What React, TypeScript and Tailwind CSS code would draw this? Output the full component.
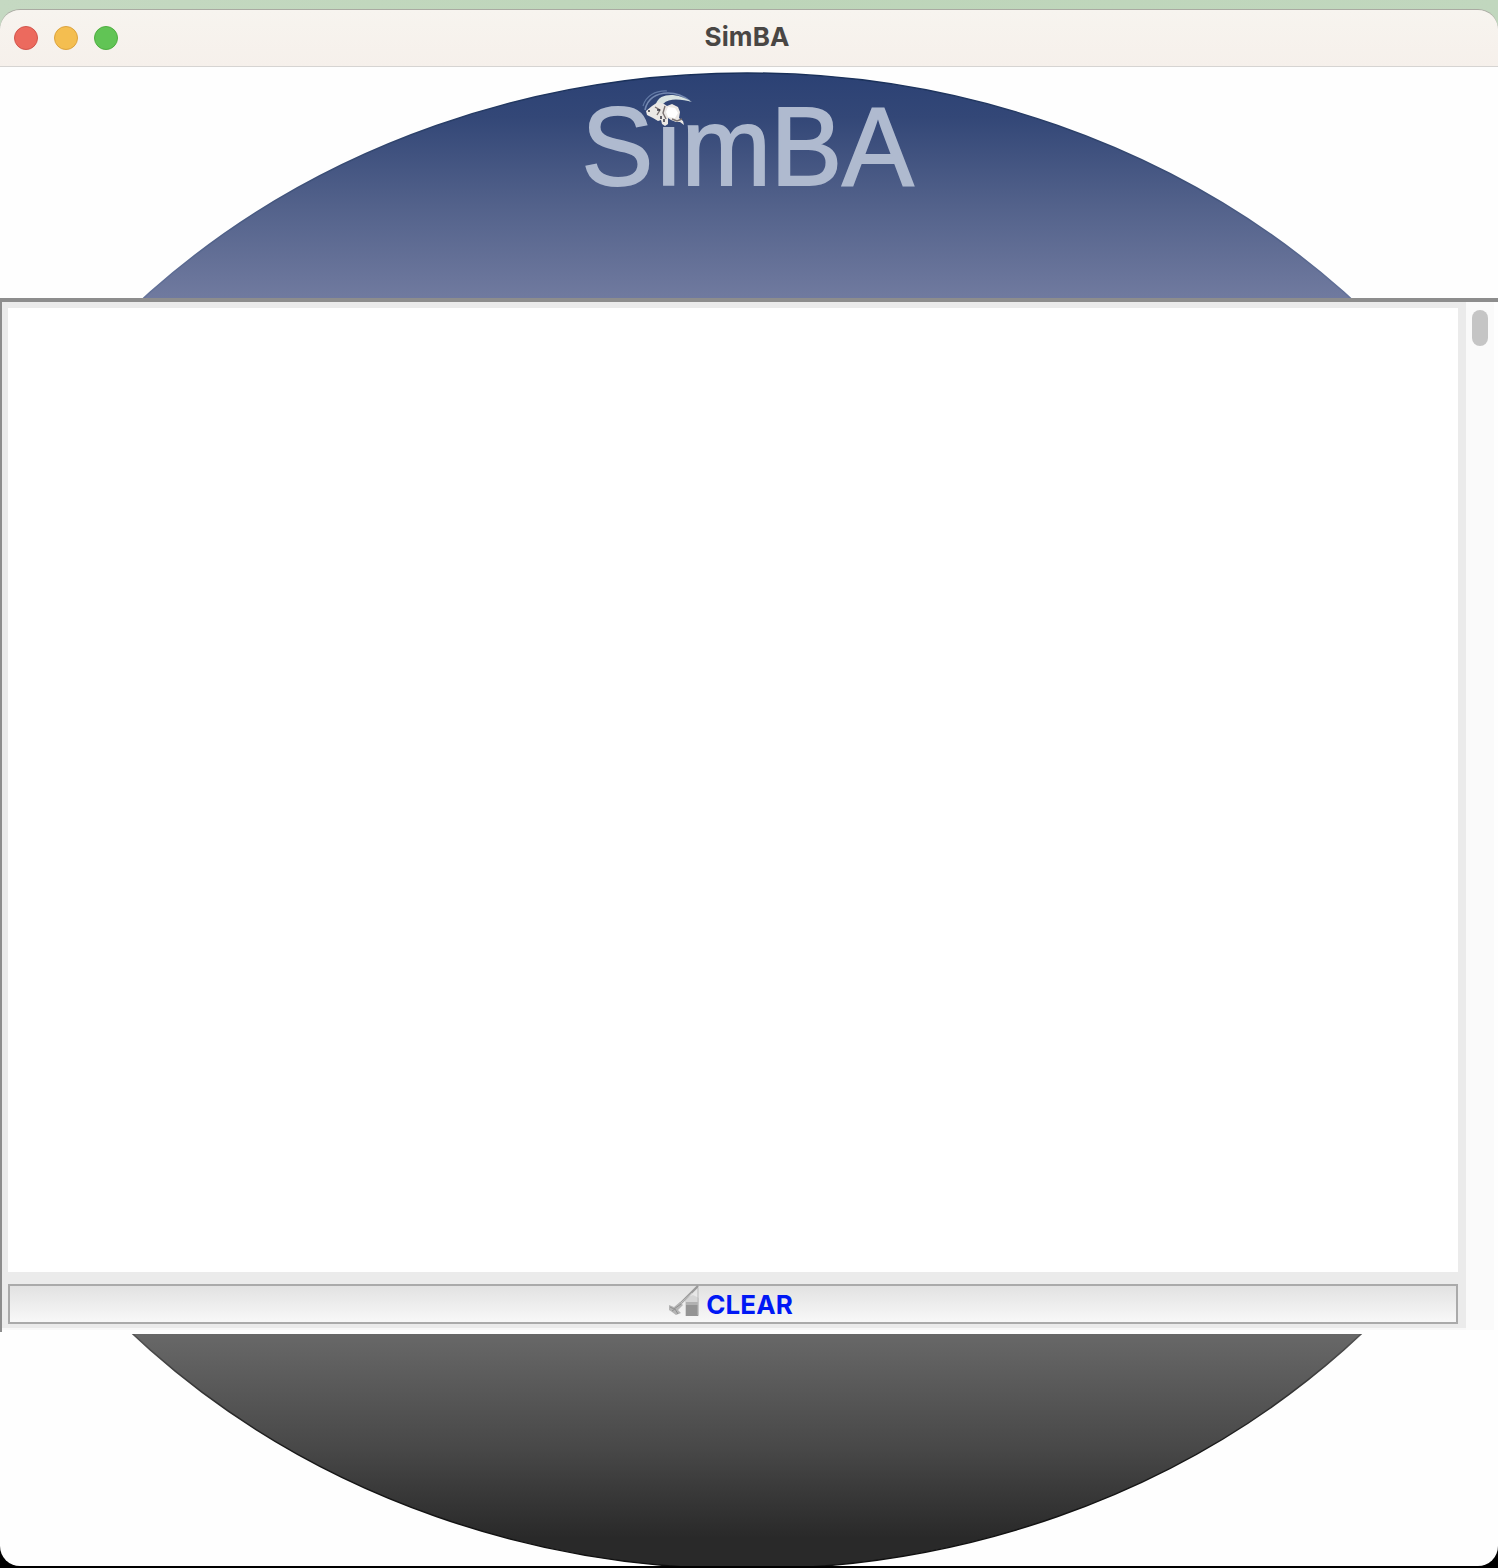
function Goat() {
  return (
    <g>
      <path d="M645 110C647 99 656 93 668 93C679 93 685 97 690 101" fill="none" stroke="#7489b1" strokeWidth="1.6" />
      <path d="M643 106C646 96 655 90.5 667 91" fill="none" stroke="#6179a5" strokeWidth="1.2" />
      <path d="M656 104C658 97 665 94.5 673 95C681 96 687 99 692 102C683 100 670 97 663 104Z" fill="#d9e4e2" />
      <path d="M646 111L652 106L658 102L664 104L667 106L672 104L678 107L680 112L679 118L683 121L684 125L680 122L676 122L671 120L668 118L668 124L665 126L662 124L661 120L658 121L653 118L647 115Z" fill="#ebe8e5" />
      <path d="M655 107L660 110L657 115M665 106L663 113L666 119M672 119L677 121L682 119" fill="none" stroke="#7b7372" strokeWidth="1.4" />
      <path d="M657 110h3M648 111h2M664 119v3M661 116v3" fill="none" stroke="#34333f" strokeWidth="1.5" />
      <path d="M668 107L675 108L678 113L675 118L668 117L666 112Z" fill="#ffffff" />
    </g>
  );
}

function Backdrop() {
  return (
    <svg className="pointer-events-none absolute inset-0" width="1498" height="1568" viewBox="0 0 1498 1568">
      <defs>
        <linearGradient id="disc" gradientUnits="userSpaceOnUse" x1="0" y1="72" x2="0" y2="1568">
          <stop offset="0" stopColor="#2b4174" />
          <stop offset="0.03" stopColor="#334777" />
          <stop offset="0.09" stopColor="#53628b" />
          <stop offset="0.151" stopColor="#707a9f" />
          <stop offset="0.5" stopColor="#d0d0d8" />
          <stop offset="0.843" stopColor="#686868" />
          <stop offset="0.92" stopColor="#484848" />
          <stop offset="0.98" stopColor="#292929" />
          <stop offset="1" stopColor="#292929" />
        </linearGradient>
        <linearGradient id="rim" gradientUnits="userSpaceOnUse" x1="0" y1="72" x2="0" y2="1568">
          <stop offset="0" stopColor="#182f59" />
          <stop offset="0.15" stopColor="#65739a" />
          <stop offset="0.84" stopColor="#555555" />
          <stop offset="0.92" stopColor="#181818" />
          <stop offset="1" stopColor="#101010" />
        </linearGradient>
        <clipPath id="letters">
          <path d="M570 90H655V127H682V90H930V200H570Z" />
        </clipPath>
      </defs>
      <ellipse cx="747" cy="821" rx="844" ry="748" fill="url(#disc)" stroke="url(#rim)" strokeWidth="1.5" />
      <g clipPath="url(#letters)">
        <text
          x="605.7 684 709.9 802.7 877.1"
          y="185.2"
          transform="scale(0.96 1)"
          fill="#afbacf"
          stroke="#afbacf"
          strokeWidth="1.8"
          className="font-['Liberation_Sans',sans-serif] text-[112px]"
        >
          SimBA
        </text>
      </g>
      <Goat />
    </svg>
  );
}

function TitleBar() {
  return (
    <header className="relative flex h-[58px] shrink-0 items-center justify-center rounded-t-[20px] border-t border-b border-t-[#aaaaa2] border-b-[#d6d4d2] bg-linear-to-b from-[#f7f4ef] to-[#f6f0eb]">
      <div className="absolute left-[14px] flex gap-4">
        <i className="size-6 rounded-full border border-[#d2554c] bg-[#ec6a5e]" />
        <i className="size-6 rounded-full border border-[#dca33e] bg-[#f4be50]" />
        <i className="size-6 rounded-full border border-[#4eae40] bg-[#61c455]" />
      </div>
      <h1 className="-mt-[2px] -ml-[4px] text-[26px] leading-none font-bold tracking-[0.1px] text-[#494644]">SimBA</h1>
    </header>
  );
}

function ClearIcon() {
  return (
    <svg className="-mt-1.5" width="32" height="32" viewBox="0 0 32 32">
      <path d="M17 13L25 10L31 13V31H17Z" fill="#d5d5d5" />
      <path d="M18 17H30V31H18Z" fill="#949494" />
      <path d="M18 17H30V20H18Z" fill="#b1b1b1" />
      <path d="M30 3V30" stroke="#b9b9b9" />
      <path d="M9 22L30 1" stroke="#999" strokeWidth="2.4" />
      <path d="M13 18L24 8" stroke="#d1d1d1" strokeWidth="0.8" />
      <path d="M1 20L6 22L12 17L15 20L10 25L13 28L8 30L4 27L1 25Z" fill="#b4b4b4" />
      <path d="M2 22L6 24L13 19M4 26L7 24L10 29" fill="none" stroke="#8f8f8f" />
    </svg>
  );
}

export default function App() {
  return (
    <div className="h-[1568px] w-[1498px] overflow-hidden bg-linear-to-b from-[#bdd5b9] from-50% to-black to-50% pt-[9px] pb-0.5 font-['Inter',sans-serif]">
      <div className="relative -mt-[9px] flex h-[1566px] flex-col overflow-hidden rounded-b-[20px] bg-[#fefefe] pt-[9px]">
        <Backdrop />
        <div className="absolute inset-x-0 top-0 h-[26px] bg-linear-to-r from-[#c5d9c2] via-[#bdd5b9] to-[#c1d7be]" />
        <TitleBar />
        <div className="h-[231px] shrink-0" />
        <main className="relative flex h-[1036px] shrink-0 flex-col bg-[#fefefe]">
          <div className="h-1 shrink-0 bg-[#8d8d8d]" />
          <div className="flex h-[1030px] border-l-2 border-[#8d8d8d]">
            <section className="flex h-[1028px] w-[1464px] flex-col border-b-2 border-[#f8f8f8] bg-[#ebebeb] px-1.5 pt-1.5">
              <div className="h-[964px] w-[1450px] shrink-0 bg-white" />
              <button className="mt-3 flex h-10 w-[1450px] items-center justify-center gap-[6px] border-2 border-[#aaaaaa] bg-linear-to-b from-[#e2e2e2] to-[#f8f8f8]">
                <ClearIcon />
                <span className="mt-[2px] mr-[5px] text-[26px] leading-none font-bold tracking-[0.1px] text-[#0018f5]">CLEAR</span>
              </button>
            </section>
            <aside className="flex h-[1028px] w-7 justify-center bg-[#fafafa] pt-2">
              <div className="h-9 w-4 rounded-full bg-[#c5c5c5]" />
            </aside>
          </div>
        </main>
      </div>
    </div>
  );
}
